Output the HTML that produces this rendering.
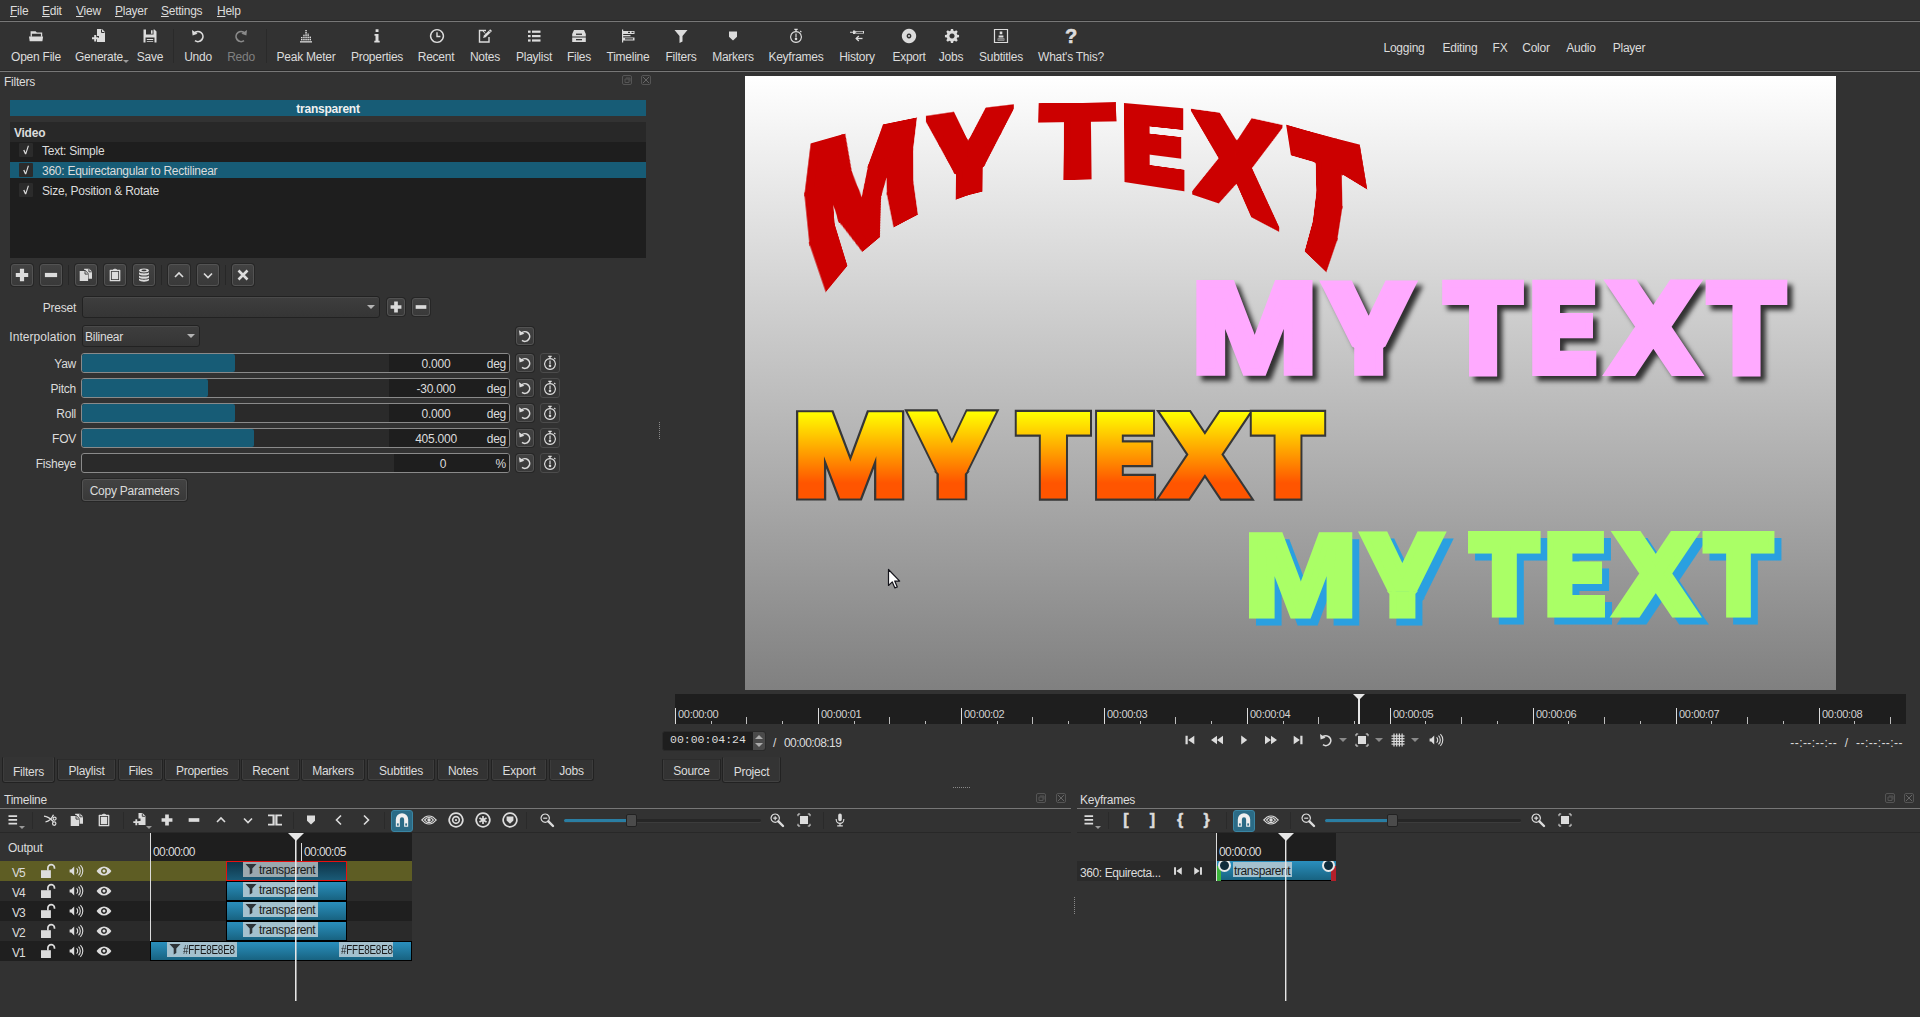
<!DOCTYPE html>
<html lang="en">
<head>
<meta charset="utf-8">
<title>Shotcut</title>
<style>
*{box-sizing:border-box;margin:0;padding:0}
html,body{width:1920px;height:1017px;overflow:hidden;background:#323232}
body{position:relative;font-family:"Liberation Sans","DejaVu Sans",sans-serif;font-size:12px;color:#dcdcdc;line-height:14px;letter-spacing:-0.25px;-webkit-font-smoothing:antialiased}
.a{position:absolute}
.t{position:absolute;white-space:nowrap;line-height:14px;height:14px}
.c{text-align:center}
.r{text-align:right}
.ic{position:absolute;display:block;overflow:visible}
.hl{position:absolute;height:1px;background:#777;box-shadow:0 -1px 0 #282828}
.btn{position:absolute;background:linear-gradient(#424242,#393939);border:1px solid #535353;border-radius:3px;box-shadow:0 0 0 1px #262626}
.btn .ic{left:50%;top:50%;transform:translate(-50%,-50%)}
.tab{position:absolute;border:1px solid #242424;border-radius:3px 3px 0 0;background:#343434;box-shadow:inset 0 1px 0 #444,inset 1px 0 0 #3d3d3d,inset -1px 0 0 #3d3d3d}
.tab.sel{background:#363636}
.tab span{position:absolute;left:0;right:0;text-align:center;line-height:14px;white-space:nowrap}
.tbl{position:absolute;width:120px;margin-left:-60px;text-align:center;white-space:nowrap;line-height:14px;height:14px}
.sld{position:absolute;height:20px;border:1px solid #8a8a8a;border-radius:3px;background:#2a2a2a;overflow:hidden}
.sld .fill{position:absolute;left:0;top:0;bottom:0;background:#175c76;border-radius:2px}
.sld .spin{position:absolute;right:0;top:0;bottom:0;background:#1e1e1e}
.dis{color:#808080}
.combo{background:linear-gradient(#3e3e3e,#353535);border:1px solid #222;border-radius:3px;box-shadow:inset 0 1px 0 #4a4a4a}
.arr{width:0;height:0;border-left:4px solid transparent;border-right:4px solid transparent;border-top:4px solid #b4b4b4}
.fl{position:absolute;left:0;top:0;font:bold 200px/200px "DejaVu Sans","Liberation Sans",sans-serif;letter-spacing:0;white-space:pre;transform-origin:0 0;-webkit-text-stroke-width:13px}
.fl.lm,.od.lm,.of.lm{font-family:"Liberation Sans","DejaVu Sans",sans-serif}
.fl.lm{-webkit-text-stroke-width:12px}
.rd{color:#cc0000;-webkit-text-stroke-color:#cc0000}
.pk{color:#ffaaff;-webkit-text-stroke-color:#ffaaff}
.gr{color:#aaff66;-webkit-text-stroke-color:#aaff66}
.od,.of{font:bold 200px "DejaVu Sans","Liberation Sans",sans-serif;letter-spacing:0}
.od{fill:#363636;stroke:#363636;stroke-linejoin:miter}
.of{stroke-linejoin:miter}
.tabs{position:absolute;border:1px solid #222;border-top-color:#2c2c2c;border-radius:0 0 3px 3px;background:#333;box-shadow:inset 0 -1px 0 #414141,inset 1px 0 0 #3c3c3c,inset -1px 0 0 #3c3c3c}
.tabs.sel{background:#343434;border-top-color:transparent}
.kbtn{border:1px solid #4c4c4c;border-radius:3px;background:#343434}
</style>
</head>
<body>
<!-- MENU BAR -->
<div class="t" style="left:10px;top:4px"><u>F</u>ile</div>
<div class="t" style="left:42px;top:4px"><u>E</u>dit</div>
<div class="t" style="left:76px;top:4px"><u>V</u>iew</div>
<div class="t" style="left:115px;top:4px"><u>P</u>layer</div>
<div class="t" style="left:161px;top:4px"><u>S</u>ettings</div>
<div class="t" style="left:217px;top:4px"><u>H</u>elp</div>
<div class="hl" style="left:0;top:21px;width:1920px"></div>
<!-- TOOLBAR -->
<div id="tb">
<div class="tbl" style="left:36px;top:50px">Open File</div><svg class="ic" width="16" height="16" viewBox="0 0 16 16" style="left:28px;top:28px"><path d="M2.6 3.2h5l1.2 1.3h5.4v4.2h-1.3v-2.9h-9v2.9h-1.3z" fill="#dcdcdc" /><path d="M1 8.6h14.1l-.7 4.7h-12.7z" fill="#dcdcdc" /></svg>
<div class="tbl" style="left:99px;top:50px">Generate</div><svg class="ic" width="16" height="16" viewBox="0 0 16 16" style="left:91px;top:28px"><path d="M6 1h5l3 3v10h-8v-4h2v-2h-2z" fill="#dcdcdc" /><path d="M10.5 1.5v3h3" fill="none" stroke="#323232" stroke-width="1"/><path d="M3.2 7h2v2.2h2.2v2h-2.2v2.2h-2v-2.2h-2.2v-2h2.2z" fill="#dcdcdc" /></svg>
<div class="a" style="left:123px;top:60px;width:0;height:0;border-left:3px solid transparent;border-right:3px solid transparent;border-top:3px solid #9a9a9a"></div>
<div class="tbl" style="left:150px;top:50px">Save</div><svg class="ic" width="16" height="16" viewBox="0 0 16 16" style="left:142px;top:28px"><path d="M1.5 1.5h11l2 2v11h-13z M4 1.5v5h7.5v-5z M3.5 9.5v5h9v-5z" fill="#dcdcdc" fill-rule="evenodd"/><path d="M9 2.3h1.6v3.4h-1.6z" fill="#dcdcdc" /><path d="M4.8 11h6.4v1h-6.4z M4.8 13h6.4v.8h-6.4z" fill="#dcdcdc" /></svg>
<div class="a" style="left:173px;top:29px;width:1px;height:34px;background:#2a2a2a"></div>
<div class="tbl" style="left:198px;top:50px">Undo</div><svg class="ic" width="16" height="16" viewBox="0 0 16 16" style="left:190px;top:28px"><path d="M4.2 5.2A5 5 0 1 1 5 12.6" fill="none" stroke="#dcdcdc" stroke-width="1.7" /><path d="M2 2l.6 5.4l5-1.6z" fill="#dcdcdc" /></svg>
<div class="tbl dis" style="left:241px;top:50px">Redo</div><svg class="ic" width="16" height="16" viewBox="0 0 16 16" style="left:233px;top:28px;opacity:.85"><path d="M11.8 5.2A5 5 0 1 0 11 12.6" fill="none"  stroke-width="1.7" stroke="#9a9a9a"/><path d="M14 2l-.6 5.4l-5-1.6z" fill="#9a9a9a"/></svg>
<div class="a" style="left:266px;top:29px;width:1px;height:34px;background:#2a2a2a"></div>
<div class="tbl" style="left:306px;top:50px">Peak Meter</div><svg class="ic" width="16" height="16" viewBox="0 0 16 16" style="left:298px;top:28px"><path d="M2 13.2h12v1.3h-12z" fill="#dcdcdc" /><rect x="3" y="9" width="1.5" height="3.4000000000000004" fill="#dcdcdc"/><rect x="5.2" y="6.6" width="1.5" height="5.800000000000001" fill="#dcdcdc"/><rect x="7.3" y="2" width="1.5" height="10.4" fill="#dcdcdc"/><rect x="9.4" y="5.4" width="1.5" height="7.0" fill="#dcdcdc"/><rect x="11.5" y="8" width="1.5" height="4.4" fill="#dcdcdc"/><rect x="2.5" y="3.3" width="11" height=".7" fill="#323232"/><rect x="2.5" y="5.6" width="11" height=".7" fill="#323232"/><rect x="2.5" y="7.9" width="11" height=".7" fill="#323232"/><rect x="2.5" y="10.2" width="11" height=".7" fill="#323232"/></svg>
<div class="tbl" style="left:377px;top:50px">Properties</div><svg class="ic" width="16" height="16" viewBox="0 0 16 16" style="left:369px;top:28px"><path d="M6.6 1.2h2.9v2.9h-2.9z M5.5 6h4v6.8h1.2v1.7h-5.4v-1.7h1.2v-5.1h-1z" fill="#dcdcdc" /></svg>
<div class="tbl" style="left:436px;top:50px">Recent</div><svg class="ic" width="16" height="16" viewBox="0 0 16 16" style="left:429px;top:28px"><path d="M8 1.6a6.4 6.4 0 1 0 .01 0z" fill="none" stroke="#dcdcdc" stroke-width="1.4" /><path d="M8 4.2v4.3h3.4" fill="none" stroke="#dcdcdc" stroke-width="1.4" /></svg>
<div class="tbl" style="left:485px;top:50px">Notes</div><svg class="ic" width="16" height="16" viewBox="0 0 16 16" style="left:477px;top:28px"><path d="M9 2.5h-6.5v11.5h9.5v-5" fill="none" stroke="#dcdcdc" stroke-width="1.4" /><path d="M13.2 1.2l1.8 1.8l-6.3 6.3l-2.6.8l.8-2.6z" fill="#dcdcdc" /><path d="M12 2.6l1.6 1.6" stroke="#323232" stroke-width=".8"/><path d="M6 3l2.2 2.6" stroke="#dcdcdc" stroke-width="1" fill="none"/></svg>
<div class="tbl" style="left:534px;top:50px">Playlist</div><svg class="ic" width="16" height="16" viewBox="0 0 16 16" style="left:526px;top:28px"><rect x="2" y="2.6" width="2.6" height="2.2" fill="#dcdcdc"/><rect x="6" y="2.6" width="8.5" height="2.2" fill="#dcdcdc"/><rect x="2" y="7" width="2.6" height="2.2" fill="#dcdcdc"/><rect x="6" y="7" width="8.5" height="2.2" fill="#dcdcdc"/><rect x="2" y="11.4" width="2.6" height="2.2" fill="#dcdcdc"/><rect x="6" y="11.4" width="8.5" height="2.2" fill="#dcdcdc"/></svg>
<div class="tbl" style="left:579px;top:50px">Files</div><svg class="ic" width="16" height="16" viewBox="0 0 16 16" style="left:571px;top:28px"><path d="M3 2h10l1.8 4v2.5h-13.6v-2.5z M1.2 9.5h13.6v4.5h-13.6z" fill="#dcdcdc" /><rect x="5" y="5.6" width="6" height="1.3" fill="#323232"/><rect x="5" y="11" width="6" height="1.3" fill="#323232"/></svg>
<div class="tbl" style="left:628px;top:50px">Timeline</div><svg class="ic" width="16" height="16" viewBox="0 0 16 16" style="left:620px;top:28px"><path d="M2 1.5h1.2v13h-1.2z" fill="#dcdcdc" /><path d="M3 3h11.5v3h-11.5z M3 7h7.5v1.2h-7.5z M3 9.5h11.5v3h-11.5z" fill="#dcdcdc" /><rect x="8" y="3.8" width="2" height="1.2" fill="#323232"/><rect x="11.5" y="3.8" width="2" height="1.2" fill="#323232"/><rect x="5" y="10.3" width="8" height="1.2" fill="#323232"/></svg>
<div class="tbl" style="left:681px;top:50px">Filters</div><svg class="ic" width="16" height="16" viewBox="0 0 16 16" style="left:673px;top:28px"><path d="M1.5 2h13l-5 6v5.5l-3 1.5v-7z" fill="#dcdcdc" /></svg>
<div class="tbl" style="left:733px;top:50px">Markers</div><svg class="ic" width="16" height="16" viewBox="0 0 16 16" style="left:725px;top:28px"><path d="M4 3.5h8v5.2l-4 3.8l-4-3.8z" fill="#dcdcdc" /></svg>
<div class="tbl" style="left:796px;top:50px">Keyframes</div><svg class="ic" width="16" height="16" viewBox="0 0 16 16" style="left:788px;top:28px"><path d="M8 3.6a5.4 5.4 0 1 0 .01 0z" fill="none" stroke="#dcdcdc" stroke-width="1.2" /><path d="M6.3 .8h3.4v1.3h-1v1.4h-1.4v-1.4h-1z" fill="#dcdcdc" /><path d="M7.4 5.5h1.2v3.7h-1.2z" fill="#dcdcdc" /><path d="M8 11.8a1.3 1.3 0 1 0 .01 0z" fill="#dcdcdc" transform="translate(0,-2.2)"/><path d="M12.2 3l1.2 1.2" fill="none" stroke="#dcdcdc" stroke-width="1.1" /></svg>
<div class="tbl" style="left:857px;top:50px">History</div><svg class="ic" width="16" height="16" viewBox="0 0 16 16" style="left:849px;top:28px"><path d="M1 3.8h3v1h-3z M4 2.6h2.2v3.4h-2.2z" fill="#dcdcdc" /><path d="M6.2 4.3h8.8" fill="none" stroke="#dcdcdc" stroke-width="2.6" /><rect x="7.2" y="3.7" width="6.8" height="1.2" fill="#323232"/><path d="M13.5 10.5h-6" fill="none" stroke="#dcdcdc" stroke-width="1.3" /><path d="M9.8 8l-2.6 2.5l2.6 2.5" fill="none" stroke="#dcdcdc" stroke-width="1.3" /></svg>
<div class="tbl" style="left:909px;top:50px">Export</div><svg class="ic" width="16" height="16" viewBox="0 0 16 16" style="left:901px;top:28px"><path d="M8 .8a7.2 7.2 0 1 0 .01 0z M8 5.6a2.4 2.4 0 1 1 -.01 0z" fill="#dcdcdc" fill-rule="evenodd"/><path d="M8 7.1a.9.9 0 1 0 .01 0z" fill="#dcdcdc" /></svg>
<div class="tbl" style="left:951px;top:50px">Jobs</div><svg class="ic" width="16" height="16" viewBox="0 0 16 16" style="left:944px;top:28px"><path d="M6.9 1h2.2l.3 1.8l1.3.55l1.5-1.05l1.55 1.55l-1.05 1.5l.55 1.3l1.8.3v2.2l-1.8.3l-.55 1.3l1.05 1.5l-1.55 1.55l-1.5-1.05l-1.3.55l-.3 1.8h-2.2l-.3-1.8l-1.3-.55l-1.5 1.05l-1.55-1.55l1.05-1.5l-.55-1.3l-1.8-.3v-2.2l1.8-.3l.55-1.3l-1.05-1.5l1.55-1.55l1.5 1.05l1.3-.55z M8 5.4a2.6 2.6 0 1 0 .01 0z" fill="#dcdcdc" fill-rule="evenodd"/></svg>
<div class="tbl" style="left:1001px;top:50px">Subtitles</div><svg class="ic" width="16" height="16" viewBox="0 0 16 16" style="left:993px;top:28px"><path d="M1.5 1.5h13v13h-13z" fill="none" stroke="#dcdcdc" stroke-width="1.2" /><path d="M6.7 3.6h2.6v2.6h-2.6z M5.6 7.4h4.8v2h-4.8z M4.6 10.4h6.8v2.2h-6.8z" fill="#dcdcdc" /><rect x="4.6" y="11.2" width="6.8" height=".6" fill="#323232"/></svg>
<div class="tbl" style="left:1071px;top:50px">What's This?</div>
<div class="t c" style="left:1061px;top:26px;width:20px;font:bold 20px/20px 'Liberation Sans',sans-serif;height:20px;-webkit-text-stroke:.6px #dcdcdc">?</div>
<div class="tbl" style="left:1404px;top:41px">Logging</div>
<div class="tbl" style="left:1460px;top:41px">Editing</div>
<div class="tbl" style="left:1500px;top:41px">FX</div>
<div class="tbl" style="left:1536px;top:41px">Color</div>
<div class="tbl" style="left:1581px;top:41px">Audio</div>
<div class="tbl" style="left:1629px;top:41px">Player</div>
</div>
<div class="hl" style="left:0;top:71px;width:1920px"></div>
<!-- FILTERS DOCK -->
<div class="t" style="left:4px;top:75px">Filters</div>
<svg class="ic" width="10" height="10" viewBox="0 0 10 10" style="left:622px;top:75px"><rect x=".5" y=".5" width="9" height="9" rx="1.5" fill="none" stroke="#555" stroke-width="1"/><path d="M3 4h4v3.5h-4z M4 3h4v3.5" fill="none" stroke="#555" stroke-width="1"/></svg><svg class="ic" width="10" height="10" viewBox="0 0 10 10" style="left:641px;top:75px"><rect x=".5" y=".5" width="9" height="9" rx="1.5" fill="none" stroke="#555" stroke-width="1"/><path d="M2 2l6 6M8 2l-6 6" fill="none" stroke="#666" stroke-width="1"/></svg>
<div class="a" style="left:10px;top:100px;width:636px;height:16px;background:#175c76"></div>
<div class="t c" style="left:10px;top:102px;width:636px;font-weight:bold;color:#f0f0f0">transparent</div>
<div class="a" style="left:10px;top:122px;width:636px;height:136px;background:#1e1e1e"></div>
<div class="a" style="left:10px;top:122px;width:636px;height:20px;background:#282828"></div>
<div class="t" style="left:14px;top:126px;font-weight:bold">Video</div>
<div class="a" style="left:10px;top:162px;width:636px;height:16px;background:#175c76"></div>
<div class="a" style="left:19px;top:143px;width:14px;height:14px;background:#2b2b2b;border-radius:1px"></div><svg class="ic" width="14" height="14" viewBox="0 0 14 14" style="left:19px;top:143px"><path d="M4.2 7.2l1.2-.4l1.2 2.6l2.2-6.6h1.2l-2.8 8.4h-1.2z" fill="#dcdcdc"/></svg>
<div class="t" style="left:42px;top:144px">Text: Simple</div>
<div class="a" style="left:19px;top:163px;width:14px;height:14px;background:#2b2b2b;border-radius:1px"></div><svg class="ic" width="14" height="14" viewBox="0 0 14 14" style="left:19px;top:163px"><path d="M4.2 7.2l1.2-.4l1.2 2.6l2.2-6.6h1.2l-2.8 8.4h-1.2z" fill="#dcdcdc"/></svg>
<div class="t" style="left:42px;top:164px">360: Equirectangular to Rectilinear</div>
<div class="a" style="left:19px;top:183px;width:14px;height:14px;background:#2b2b2b;border-radius:1px"></div><svg class="ic" width="14" height="14" viewBox="0 0 14 14" style="left:19px;top:183px"><path d="M4.2 7.2l1.2-.4l1.2 2.6l2.2-6.6h1.2l-2.8 8.4h-1.2z" fill="#dcdcdc"/></svg>
<div class="t" style="left:42px;top:184px">Size, Position &amp; Rotate</div>
<div class="btn" style="left:11px;top:264px;width:22px;height:22px"><svg class="ic" width="16" height="16" viewBox="0 0 16 16" style=""><path d="M5.9 1.8h4.2v4.1h4.1v4.2h-4.1v4.1h-4.2v-4.1h-4.1v-4.2h4.1z" fill="#dcdcdc" /></svg></div>
<div class="btn" style="left:40px;top:264px;width:22px;height:22px"><svg class="ic" width="16" height="16" viewBox="0 0 16 16" style=""><path d="M1.9 5.9h12.2v4.2h-12.2z" fill="#dcdcdc" /></svg></div>
<div class="btn" style="left:75px;top:264px;width:22px;height:22px"><svg class="ic" width="16" height="16" viewBox="0 0 16 16" style=""><path d="M6.2 1.7h5l2.8 2.8v7.3h-3.4v-5.4l-3.3-3.3h-1.1z" fill="#dcdcdc" /><path d="M10.9 1.9v2.9h2.9" fill="none" stroke="#3b3b3b" stroke-width=".9"/><path d="M1.7 4h5.6l2.8 2.8v7.1h-8.4z" fill="#dcdcdc" /><path d="M7 4.2v2.9h2.9" fill="none" stroke="#3b3b3b" stroke-width=".9"/></svg></div>
<div class="btn" style="left:104px;top:264px;width:22px;height:22px"><svg class="ic" width="16" height="16" viewBox="0 0 16 16" style=""><path d="M3.3 3.3h9.4v10.4h-9.4z" fill="none" stroke="#dcdcdc" stroke-width="1.3" stroke-linejoin="round"/><path d="M4.8 4.8h6.4v7.4h-6.4z" fill="#dcdcdc" /><path d="M6 2.2h1.2l.8-1l.8 1h1.2v1.6h-4z" fill="#dcdcdc" /></svg></div>
<div class="btn" style="left:133px;top:264px;width:22px;height:22px"><svg class="ic" width="16" height="16" viewBox="0 0 16 16" style=""><path d="M8 1.5c3 0 5 .9 5 2s-2 2-5 2s-5-.9-5-2s2-2 5-2z" fill="#dcdcdc" /><ellipse cx="8" cy="3.4" rx="2.6" ry=".8" fill="#3b3b3b"/><path d="M3 5.2c1 1.6 9 1.6 10 0v2c-1 1.7-9 1.7-10 0z M3 8.4c1 1.6 9 1.6 10 0v2c-1 1.7-9 1.7-10 0z M3 11.6c1 1.6 9 1.6 10 0v1.6c-1 1.9-9 1.9-10 0z" fill="#dcdcdc" /></svg></div>
<div class="btn" style="left:168px;top:264px;width:22px;height:22px"><svg class="ic" width="16" height="16" viewBox="0 0 16 16" style=""><path d="M4 10l4-4l4 4" fill="none" stroke="#dcdcdc" stroke-width="1.6" /></svg></div>
<div class="btn" style="left:197px;top:264px;width:22px;height:22px"><svg class="ic" width="16" height="16" viewBox="0 0 16 16" style=""><path d="M4 6.5l4 4l4-4" fill="none" stroke="#dcdcdc" stroke-width="1.6" /></svg></div>
<div class="btn" style="left:232px;top:264px;width:22px;height:22px"><svg class="ic" width="16" height="16" viewBox="0 0 16 16" style=""><path d="M3.5 3.5l9 9M12.5 3.5l-9 9" fill="none" stroke="#dcdcdc" stroke-width="2.6" /></svg></div>
<div class="a" style="left:68px;top:265px;width:1px;height:20px;background:#272727"></div>
<div class="a" style="left:161px;top:265px;width:1px;height:20px;background:#272727"></div>
<div class="a" style="left:225px;top:265px;width:1px;height:20px;background:#272727"></div>
<div class="t r" style="left:0;top:301px;width:76px">Preset</div>
<div class="a combo" style="left:82px;top:296px;width:298px;height:22px"></div>
<div class="a arr" style="left:367px;top:305px"></div>
<div class="btn" style="left:387px;top:298px;width:18px;height:18px"><svg class="ic" width="14" height="14" viewBox="0 0 16 16" style=""><path d="M5.9 1.8h4.2v4.1h4.1v4.2h-4.1v4.1h-4.2v-4.1h-4.1v-4.2h4.1z" fill="#dcdcdc" /></svg></div>
<div class="btn" style="left:412px;top:298px;width:18px;height:18px"><svg class="ic" width="14" height="14" viewBox="0 0 16 16" style=""><path d="M1.9 5.9h12.2v4.2h-12.2z" fill="#dcdcdc" /></svg></div>
<div class="t r" style="left:0;top:330px;width:76px;letter-spacing:0.05px">Interpolation</div>
<div class="a combo" style="left:82px;top:325px;width:118px;height:22px"></div>
<div class="t" style="left:85px;top:330px">Bilinear</div>
<div class="a arr" style="left:187px;top:334px"></div>
<div class="btn" style="left:516px;top:327px;width:18px;height:18px"><svg class="ic" width="16" height="16" viewBox="0 0 16 16" style=""><path d="M4.4 5.2A4.8 4.8 0 1 1 5 12.4" fill="none" stroke="#dcdcdc" stroke-width="1.6" /><path d="M2 2.2l.6 5.2l4.8-1.6z" fill="#dcdcdc" /></svg></div>
<div class="t r" style="left:0;top:357px;width:76px">Yaw</div>
<div class="sld" style="left:81px;top:353px;width:429px"><div class="fill" style="width:153px"></div><div class="spin" style="width:120px"></div></div>
<div class="t c" style="left:396px;top:357px;width:80px">0.000</div>
<div class="t r" style="left:456px;top:357px;width:50px">deg</div>
<div class="btn" style="left:516px;top:354px;width:18px;height:18px"><svg class="ic" width="16" height="16" viewBox="0 0 16 16" style=""><path d="M4.4 5.2A4.8 4.8 0 1 1 5 12.4" fill="none" stroke="#dcdcdc" stroke-width="1.6" /><path d="M2 2.2l.6 5.2l4.8-1.6z" fill="#dcdcdc" /></svg></div>
<div class="a kbtn" style="left:540px;top:353px;width:20px;height:20px"><svg class="ic" width="16" height="16" viewBox="0 0 16 16" style="left:1px;top:1px"><path d="M8 3.6a5.4 5.4 0 1 0 .01 0z" fill="none" stroke="#dcdcdc" stroke-width="1.2" /><path d="M6.3 .8h3.4v1.3h-1v1.4h-1.4v-1.4h-1z" fill="#dcdcdc" /><path d="M7.4 5.5h1.2v3.7h-1.2z" fill="#dcdcdc" /><path d="M8 11.8a1.3 1.3 0 1 0 .01 0z" fill="#dcdcdc" transform="translate(0,-2.2)"/><path d="M12.2 3l1.2 1.2" fill="none" stroke="#dcdcdc" stroke-width="1.1" /></svg></div>
<div class="t r" style="left:0;top:382px;width:76px">Pitch</div>
<div class="sld" style="left:81px;top:378px;width:429px"><div class="fill" style="width:126px"></div><div class="spin" style="width:120px"></div></div>
<div class="t c" style="left:396px;top:382px;width:80px">-30.000</div>
<div class="t r" style="left:456px;top:382px;width:50px">deg</div>
<div class="btn" style="left:516px;top:379px;width:18px;height:18px"><svg class="ic" width="16" height="16" viewBox="0 0 16 16" style=""><path d="M4.4 5.2A4.8 4.8 0 1 1 5 12.4" fill="none" stroke="#dcdcdc" stroke-width="1.6" /><path d="M2 2.2l.6 5.2l4.8-1.6z" fill="#dcdcdc" /></svg></div>
<div class="a kbtn" style="left:540px;top:378px;width:20px;height:20px"><svg class="ic" width="16" height="16" viewBox="0 0 16 16" style="left:1px;top:1px"><path d="M8 3.6a5.4 5.4 0 1 0 .01 0z" fill="none" stroke="#dcdcdc" stroke-width="1.2" /><path d="M6.3 .8h3.4v1.3h-1v1.4h-1.4v-1.4h-1z" fill="#dcdcdc" /><path d="M7.4 5.5h1.2v3.7h-1.2z" fill="#dcdcdc" /><path d="M8 11.8a1.3 1.3 0 1 0 .01 0z" fill="#dcdcdc" transform="translate(0,-2.2)"/><path d="M12.2 3l1.2 1.2" fill="none" stroke="#dcdcdc" stroke-width="1.1" /></svg></div>
<div class="t r" style="left:0;top:407px;width:76px">Roll</div>
<div class="sld" style="left:81px;top:403px;width:429px"><div class="fill" style="width:153px"></div><div class="spin" style="width:120px"></div></div>
<div class="t c" style="left:396px;top:407px;width:80px">0.000</div>
<div class="t r" style="left:456px;top:407px;width:50px">deg</div>
<div class="btn" style="left:516px;top:404px;width:18px;height:18px"><svg class="ic" width="16" height="16" viewBox="0 0 16 16" style=""><path d="M4.4 5.2A4.8 4.8 0 1 1 5 12.4" fill="none" stroke="#dcdcdc" stroke-width="1.6" /><path d="M2 2.2l.6 5.2l4.8-1.6z" fill="#dcdcdc" /></svg></div>
<div class="a kbtn" style="left:540px;top:403px;width:20px;height:20px"><svg class="ic" width="16" height="16" viewBox="0 0 16 16" style="left:1px;top:1px"><path d="M8 3.6a5.4 5.4 0 1 0 .01 0z" fill="none" stroke="#dcdcdc" stroke-width="1.2" /><path d="M6.3 .8h3.4v1.3h-1v1.4h-1.4v-1.4h-1z" fill="#dcdcdc" /><path d="M7.4 5.5h1.2v3.7h-1.2z" fill="#dcdcdc" /><path d="M8 11.8a1.3 1.3 0 1 0 .01 0z" fill="#dcdcdc" transform="translate(0,-2.2)"/><path d="M12.2 3l1.2 1.2" fill="none" stroke="#dcdcdc" stroke-width="1.1" /></svg></div>
<div class="t r" style="left:0;top:432px;width:76px">FOV</div>
<div class="sld" style="left:81px;top:428px;width:429px"><div class="fill" style="width:172px"></div><div class="spin" style="width:120px"></div></div>
<div class="t c" style="left:396px;top:432px;width:80px">405.000</div>
<div class="t r" style="left:456px;top:432px;width:50px">deg</div>
<div class="btn" style="left:516px;top:429px;width:18px;height:18px"><svg class="ic" width="16" height="16" viewBox="0 0 16 16" style=""><path d="M4.4 5.2A4.8 4.8 0 1 1 5 12.4" fill="none" stroke="#dcdcdc" stroke-width="1.6" /><path d="M2 2.2l.6 5.2l4.8-1.6z" fill="#dcdcdc" /></svg></div>
<div class="a kbtn" style="left:540px;top:428px;width:20px;height:20px"><svg class="ic" width="16" height="16" viewBox="0 0 16 16" style="left:1px;top:1px"><path d="M8 3.6a5.4 5.4 0 1 0 .01 0z" fill="none" stroke="#dcdcdc" stroke-width="1.2" /><path d="M6.3 .8h3.4v1.3h-1v1.4h-1.4v-1.4h-1z" fill="#dcdcdc" /><path d="M7.4 5.5h1.2v3.7h-1.2z" fill="#dcdcdc" /><path d="M8 11.8a1.3 1.3 0 1 0 .01 0z" fill="#dcdcdc" transform="translate(0,-2.2)"/><path d="M12.2 3l1.2 1.2" fill="none" stroke="#dcdcdc" stroke-width="1.1" /></svg></div>
<div class="t r" style="left:0;top:457px;width:76px">Fisheye</div>
<div class="sld" style="left:81px;top:453px;width:429px"><div class="spin" style="width:115px"></div></div>
<div class="t c" style="left:403px;top:457px;width:80px">0</div>
<div class="t r" style="left:456px;top:457px;width:50px">%</div>
<div class="btn" style="left:516px;top:454px;width:18px;height:18px"><svg class="ic" width="16" height="16" viewBox="0 0 16 16" style=""><path d="M4.4 5.2A4.8 4.8 0 1 1 5 12.4" fill="none" stroke="#dcdcdc" stroke-width="1.6" /><path d="M2 2.2l.6 5.2l4.8-1.6z" fill="#dcdcdc" /></svg></div>
<div class="a kbtn" style="left:540px;top:453px;width:20px;height:20px"><svg class="ic" width="16" height="16" viewBox="0 0 16 16" style="left:1px;top:1px"><path d="M8 3.6a5.4 5.4 0 1 0 .01 0z" fill="none" stroke="#dcdcdc" stroke-width="1.2" /><path d="M6.3 .8h3.4v1.3h-1v1.4h-1.4v-1.4h-1z" fill="#dcdcdc" /><path d="M7.4 5.5h1.2v3.7h-1.2z" fill="#dcdcdc" /><path d="M8 11.8a1.3 1.3 0 1 0 .01 0z" fill="#dcdcdc" transform="translate(0,-2.2)"/><path d="M12.2 3l1.2 1.2" fill="none" stroke="#dcdcdc" stroke-width="1.1" /></svg></div>
<div class="btn" style="left:82px;top:479px;width:105px;height:22px;border-radius:3px"></div>
<div class="t c" style="left:82px;top:484px;width:105px">Copy Parameters</div>
<div class="a" style="left:659px;top:422px;width:1px;height:18px;background:repeating-linear-gradient(#8a8a8a 0 1px,transparent 1px 2px)"></div>
<!-- PREVIEW -->
<div id="pv" class="a" style="left:745px;top:76px;width:1091px;height:614px;overflow:hidden;background:linear-gradient(#ffffff,#808080)">
<div class="a" style="left:0;top:0;width:0;height:0">
<span class="fl rd lm" style="clip-path:polygon(-53.0px -15.0px,53.9px -15.0px,53.9px 76.3px,-53.0px 76.3px);transform:matrix3d(1.06208,-5.42619e-05,0,0.00351075,-0.101738,1.12088,0,0.00047141,0,0,1,0,62.8741,41.9411,0,1)">M</span>
<span class="fl rd lm" aria-hidden="true" style="clip-path:polygon(-53.0px 73.7px,53.9px 73.7px,53.9px 126.3px,-53.0px 126.3px);transform:matrix3d(1.22597,0.121488,0,0.00487505,0.182848,1.29355,0,0.00109867,0,0,1,0,43.7297,34.8679,0,1)">M</span>
<span class="fl rd lm" aria-hidden="true" style="clip-path:polygon(-53.0px 123.7px,53.9px 123.7px,53.9px 215.0px,-53.0px 215.0px);transform:matrix3d(1.40429,0.336481,0,0.00649051,0.502506,1.4488,0,0.00133059,0,0,1,0,5.10987,20.7481,0,1)">M</span>
<span class="fl rd lm" aria-hidden="true" style="clip-path:polygon(51.3px -15.0px,114.7px -15.0px,114.7px 76.3px,51.3px 76.3px);transform:matrix3d(1.43172,-0.00958738,0,0.00414189,-0.141976,1.09892,0,5.99995e-05,0,0,1,0,46.6625,44.3312,0,1)">M</span>
<span class="fl rd lm" aria-hidden="true" style="clip-path:polygon(51.3px 73.7px,114.7px 73.7px,114.7px 126.3px,51.3px 126.3px);transform:matrix3d(1.61183,0.0195603,0,0.00487815,0.178481,1.2844,0,0.00105425,0,0,1,0,23.4721,40.5884,0,1)">M</span>
<span class="fl rd lm" aria-hidden="true" style="clip-path:polygon(51.3px 123.7px,114.7px 123.7px,114.7px 215.0px,51.3px 215.0px);transform:matrix3d(2.1333,0.159933,0,0.0071201,0.690102,1.85188,0,0.00265168,0,0,1,0,-38.0415,8.51766,0,1)">M</span>
<span class="fl rd lm" aria-hidden="true" style="clip-path:polygon(112.1px -15.0px,219.0px -15.0px,219.0px 76.3px,112.1px 76.3px);transform:matrix3d(1.9157,-0.0197451,0,0.00486025,-0.237473,1.09091,0,-0.000600451,0,0,1,0,3.2382,48.8053,0,1)">M</span>
<span class="fl rd lm" aria-hidden="true" style="clip-path:polygon(112.1px 73.7px,219.0px 73.7px,219.0px 126.3px,112.1px 126.3px);transform:matrix3d(1.56723,-0.11817,0,0.00320057,0.116553,1.07634,0,0.000633252,0,0,1,0,3.32749,52.9039,0,1)">M</span>
<span class="fl rd lm" aria-hidden="true" style="clip-path:polygon(112.1px 123.7px,219.0px 123.7px,219.0px 215.0px,112.1px 215.0px);transform:matrix3d(1.61606,-0.233887,0,0.00268159,0.613437,1.50733,0,0.00263025,0,0,1,0,-38.4423,35.1768,0,1)">M</span>
<span class="fl rd" style="clip-path:polygon(-73.0px -23.5px,73.8px -23.5px,73.8px 61.5px,-73.0px 61.5px);transform:matrix3d(0.809057,-0.0334439,0,0.00129855,0.0382796,0.755068,0,0.000202872,0,0,1,0,186.048,26.8698,0,1)">Y</span>
<span class="fl rd" aria-hidden="true" style="clip-path:polygon(-73.0px 58.9px,73.8px 58.9px,73.8px 105.2px,-73.0px 105.2px);transform:matrix3d(0.814249,-0.0319519,0,0.001322,0.038971,0.768706,0,0.000206536,0,0,1,0,186.059,26.0617,0,1)">Y</span>
<span class="fl rd" aria-hidden="true" style="clip-path:polygon(-73.0px 102.7px,73.8px 102.7px,73.8px 215.5px,-73.0px 215.5px);transform:matrix3d(0.811439,-0.0295331,0,0.00133194,0.0215605,0.425282,0,0.000114265,0,0,1,0,186.095,60.7624,0,1)">Y</span>
<span class="fl rd" aria-hidden="true" style="clip-path:polygon(71.2px -23.5px,218.0px -23.5px,218.0px 61.5px,71.2px 61.5px);transform:matrix3d(0.872404,-0.0416537,0,0.00102099,0.0120418,0.732674,0,8.47202e-05,0,0,1,0,176.954,27.0924,0,1)">Y</span>
<span class="fl rd" aria-hidden="true" style="clip-path:polygon(71.2px 58.9px,218.0px 58.9px,218.0px 105.2px,71.2px 105.2px);transform:matrix3d(0.874792,-0.0412851,0,0.00102861,0.0121316,0.738142,0,8.53526e-05,0,0,1,0,176.908,26.7736,0,1)">Y</span>
<span class="fl rd" aria-hidden="true" style="clip-path:polygon(71.2px 102.7px,218.0px 102.7px,218.0px 215.5px,71.2px 215.5px);transform:matrix3d(0.873583,-0.0405834,0,0.0010318,0.00668227,0.406579,0,4.70133e-05,0,0,1,0,176.725,60.8405,0,1)">Y</span>
<span class="fl" style="transform:scale(0)"> </span>
<span class="fl rd" style="transform:matrix3d(0.539932,-0.00557641,0,5.30641e-05,-0.12372,0.443719,0,-0.000372334,0,0,1,0,296.856,19.5624,0,1)">T</span>
<span class="fl rd" style="transform:matrix3d(0.336264,0.032788,0,-0.000406842,0.0183194,0.499292,0,4.16919e-05,0,0,1,0,373.219,18.2769,0,1)">E</span>
<span class="fl rd" style="clip-path:polygon(-68.0px -23.5px,78.3px -23.5px,78.3px 215.5px,-68.0px 215.5px);transform:matrix3d(-0.0221735,0.0311642,0,-0.00121511,0.142042,0.580749,0,0.000298989,0,0,1,0,447.873,23.5202,0,1)">X</span>
<span class="fl rd" aria-hidden="true" style="clip-path:polygon(75.7px -23.5px,222.0px -23.5px,222.0px 215.5px,75.7px 215.5px);transform:matrix3d(-0.26164,0.0400073,0,-0.00142254,0.125872,0.566534,0,0.000265897,0,0,1,0,458.45,22.4304,0,1)">X</span>
<span class="fl rd" style="clip-path:polygon(-65.5px -22.5px,42.8px -22.5px,42.8px 57.5px,-65.5px 57.5px);transform:matrix3d(0.464294,0.138926,0,-5.26195e-05,-0.266653,0.686621,0,-0.000701318,0,0,1,0,541.918,37.1635,0,1)">T</span>
<span class="fl rd" aria-hidden="true" style="clip-path:polygon(40.2px -22.5px,95.8px -22.5px,95.8px 57.5px,40.2px 57.5px);transform:matrix3d(-0.968464,-0.0278214,0,-0.00239949,0.102128,0.678418,0,-3.39267e-05,0,0,1,0,546.524,39.4493,0,1)">T</span>
<span class="fl rd" aria-hidden="true" style="clip-path:polygon(40.2px 54.9px,95.8px 54.9px,95.8px 97.8px,40.2px 97.8px);transform:matrix3d(-0.848635,-0.00425575,0,-0.0022233,0.21367,0.73726,0,0.00033775,0,0,1,0,551.354,37.5627,0,1)">T</span>
<span class="fl rd" aria-hidden="true" style="clip-path:polygon(40.2px 95.2px,95.8px 95.2px,95.8px 137.3px,40.2px 137.3px);transform:matrix3d(-0.832386,0.0105493,0,-0.00224554,0.44586,0.885642,0,0.00094627,0,0,1,0,561.266,29.3005,0,1)">T</span>
<span class="fl rd" aria-hidden="true" style="clip-path:polygon(40.2px 134.7px,95.8px 134.7px,95.8px 215.5px,40.2px 215.5px);transform:matrix3d(-0.981086,-0.00144574,0,-0.00259835,0.868987,1.2112,0,0.00197657,0,0,1,0,581.067,3.72192,0,1)">T</span>
<span class="fl rd" aria-hidden="true" style="clip-path:polygon(93.2px -22.5px,201.5px -22.5px,201.5px 57.5px,93.2px 57.5px);transform:matrix3d(-1.54044,-0.120136,0,-0.00308796,0.340239,0.667659,0,0.000380039,0,0,1,0,562.222,44.7162,0,1)">T</span>
</div>
<div class="a" style="left:0;top:0;width:0;height:0;filter:drop-shadow(5.5px 5.5px 2.5px #303030)">
<span class="fl pk lm" style="transform:matrix(0.76513,0,0,0.64333,445.84,187.62)">M</span>
<span class="fl pk" style="clip-path:polygon(-60px -43.5px,260px -43.5px,260px 104.5px,-60px 104.5px);transform:matrix(0.57193,0,0,0.76141,582.14,191.14)">Y</span>
<span class="fl pk" aria-hidden="true" style="clip-path:polygon(-60px 103.4px,260px 103.4px,260px 235.5px,-60px 235.5px);transform:matrix(0.57193,0,0,0.4181,582.14,226.82)">Y</span>
<span class="fl" style="transform:scale(0)"> </span>
<span class="fl pk" style="transform:matrix(0.5551,0,0,0.61076,700.25,193.01)">T</span>
<span class="fl pk" style="transform:matrix(0.54872,0,0,0.60692,780.69,193.69)">E</span>
<span class="fl pk" style="transform:matrix(0.59824,0,0,0.60692,862.29,193.69)">X</span>
<span class="fl pk" style="transform:matrix(0.55374,0,0,0.61076,963.85,193.01)">T</span>
</div>
<div class="a" style="left:0;top:0;width:0;height:0;filter:drop-shadow(7px 7px 0 #2aa0e0)">
<span class="fl gr lm" style="transform:matrix(0.67961,0,0,0.57333,498.94,441.67)">M</span>
<span class="fl gr" style="clip-path:polygon(-60px -43.5px,260px -43.5px,260px 104.5px,-60px 104.5px);transform:matrix(0.51228,0,0,0.67856,620.36,444.8)">Y</span>
<span class="fl gr" aria-hidden="true" style="clip-path:polygon(-60px 103.4px,260px 103.4px,260px 235.5px,-60px 235.5px);transform:matrix(0.51228,0,0,0.37261,620.36,476.61)">Y</span>
<span class="fl" style="transform:scale(0)"> </span>
<span class="fl gr" style="transform:matrix(0.49252,0,0,0.5443,725.71,446.47)">T</span>
<span class="fl gr" style="transform:matrix(0.49402,0,0,0.54088,796.52,447.08)">E</span>
<span class="fl gr" style="transform:matrix(0.53941,0,0,0.54088,869.32,447.08)">X</span>
<span class="fl gr" style="transform:matrix(0.48776,0,0,0.5443,960.18,446.47)">T</span>
</div>
<svg class="a" style="left:0;top:0;overflow:visible" width="1091" height="614" viewBox="0 0 1091 614">
<linearGradient id="og0" gradientUnits="userSpaceOnUse" x1="0" y1="-144.00" x2="0" y2="6.00"><stop offset="0" stop-color="#ffff00"/><stop offset="0.82" stop-color="#ff5500"/><stop offset="1" stop-color="#ff5500"/></linearGradient><clipPath id="oc1" clipPathUnits="userSpaceOnUse"><rect x="0" y="295.2" width="1091" height="100.9"/></clipPath><linearGradient id="og2" gradientUnits="userSpaceOnUse" x1="0" y1="-152.50" x2="0" y2="-25.76"><stop offset="0" stop-color="#ffff00"/><stop offset="0.82" stop-color="#ff5500"/><stop offset="1" stop-color="#ff5500"/></linearGradient><clipPath id="oc3" clipPathUnits="userSpaceOnUse"><rect x="0" y="395.5" width="1091" height="49.5"/></clipPath><linearGradient id="og4" gradientUnits="userSpaceOnUse" x1="0" y1="-224.31" x2="0" y2="6.50"><stop offset="0" stop-color="#ffff00"/><stop offset="0.82" stop-color="#ff5500"/><stop offset="1" stop-color="#ff5500"/></linearGradient><linearGradient id="og5" gradientUnits="userSpaceOnUse" x1="0" y1="-151.50" x2="0" y2="6.50"><stop offset="0" stop-color="#ffff00"/><stop offset="0.82" stop-color="#ff5500"/><stop offset="1" stop-color="#ff5500"/></linearGradient><linearGradient id="og6" gradientUnits="userSpaceOnUse" x1="0" y1="-152.50" x2="0" y2="6.50"><stop offset="0" stop-color="#ffff00"/><stop offset="0.82" stop-color="#ff5500"/><stop offset="1" stop-color="#ff5500"/></linearGradient><linearGradient id="og7" gradientUnits="userSpaceOnUse" x1="0" y1="-152.50" x2="0" y2="6.50"><stop offset="0" stop-color="#ffff00"/><stop offset="0.82" stop-color="#ff5500"/><stop offset="1" stop-color="#ff5500"/></linearGradient><linearGradient id="og8" gradientUnits="userSpaceOnUse" x1="0" y1="-151.50" x2="0" y2="6.50"><stop offset="0" stop-color="#ffff00"/><stop offset="0.82" stop-color="#ff5500"/><stop offset="1" stop-color="#ff5500"/></linearGradient>
<g aria-hidden="true"><g><g transform="matrix(0.68289,0,0,0.576,48.32,419.04)"><text class="od lm" stroke-width="18.7">M</text></g></g><g clip-path="url(#oc1)"><g transform="matrix(0.51228,0,0,0.68172,169.76,440.06)"><text class="od" stroke-width="20.0">Y</text></g></g><g clip-path="url(#oc3)"><g transform="matrix(0.51228,0,0,0.37434,169.76,420.07)"><text class="od" stroke-width="22.5">Y</text></g></g><g><g transform="matrix(0.49728,0,0,0.54684,274.54,418.95)"><text class="od" stroke-width="21.0">T</text></g></g><g><g transform="matrix(0.48889,0,0,0.5434,346.18,418.97)"><text class="od" stroke-width="21.1">E</text></g></g><g><g transform="matrix(0.53765,0,0,0.5434,418.6,418.97)"><text class="od" stroke-width="20.8">X</text></g></g><g><g transform="matrix(0.49116,0,0,0.54684,509.5,418.95)"><text class="od" stroke-width="21.1">T</text></g></g></g>
<g><g transform="matrix(0.68289,0,0,0.576,48.32,419.04)"><text class="of lm" fill="url(#og0)" stroke="url(#og0)" stroke-width="12">M</text></g></g><g clip-path="url(#oc1)"><g transform="matrix(0.51228,0,0,0.68172,169.76,440.06)"><text class="of" fill="url(#og2)" stroke="url(#og2)" stroke-width="13">Y</text></g></g><g clip-path="url(#oc3)" aria-hidden="true"><g transform="matrix(0.51228,0,0,0.37434,169.76,420.07)"><text class="of" fill="url(#og4)" stroke="url(#og4)" stroke-width="13">Y</text></g></g><text class="of" transform="scale(0)"> </text><g><g transform="matrix(0.49728,0,0,0.54684,274.54,418.95)"><text class="of" fill="url(#og5)" stroke="url(#og5)" stroke-width="13">T</text></g></g><g><g transform="matrix(0.48889,0,0,0.5434,346.18,418.97)"><text class="of" fill="url(#og6)" stroke="url(#og6)" stroke-width="13">E</text></g></g><g><g transform="matrix(0.53765,0,0,0.5434,418.6,418.97)"><text class="of" fill="url(#og7)" stroke="url(#og7)" stroke-width="13">X</text></g></g><g><g transform="matrix(0.49116,0,0,0.54684,509.5,418.95)"><text class="of" fill="url(#og8)" stroke="url(#og8)" stroke-width="13">T</text></g></g>
</svg>
</div>
<!-- PLAYER SCRUB BAR -->
<div class="a" style="left:675px;top:694px;width:1231px;height:30px;background:#1e1e1e;overflow:hidden">
<div class="a" style="left:0.0px;top:14px;width:1px;height:16px;background:#dcdcdc"></div>
<div class="t" style="left:3.0px;top:13px;font-size:11px;letter-spacing:-0.3px;color:#d2d2d2">00:00:00</div>
<div class="a" style="left:36px;top:27px;width:1px;height:3px;background:#bdbdbd"></div>
<div class="a" style="left:71px;top:23px;width:1px;height:7px;background:#bdbdbd"></div>
<div class="a" style="left:107px;top:27px;width:1px;height:3px;background:#bdbdbd"></div>
<div class="a" style="left:143.0px;top:14px;width:1px;height:16px;background:#dcdcdc"></div>
<div class="t" style="left:146.0px;top:13px;font-size:11px;letter-spacing:-0.3px;color:#d2d2d2">00:00:01</div>
<div class="a" style="left:179px;top:27px;width:1px;height:3px;background:#bdbdbd"></div>
<div class="a" style="left:214px;top:23px;width:1px;height:7px;background:#bdbdbd"></div>
<div class="a" style="left:250px;top:27px;width:1px;height:3px;background:#bdbdbd"></div>
<div class="a" style="left:286.0px;top:14px;width:1px;height:16px;background:#dcdcdc"></div>
<div class="t" style="left:289.0px;top:13px;font-size:11px;letter-spacing:-0.3px;color:#d2d2d2">00:00:02</div>
<div class="a" style="left:322px;top:27px;width:1px;height:3px;background:#bdbdbd"></div>
<div class="a" style="left:357px;top:23px;width:1px;height:7px;background:#bdbdbd"></div>
<div class="a" style="left:393px;top:27px;width:1px;height:3px;background:#bdbdbd"></div>
<div class="a" style="left:429.0px;top:14px;width:1px;height:16px;background:#dcdcdc"></div>
<div class="t" style="left:432.0px;top:13px;font-size:11px;letter-spacing:-0.3px;color:#d2d2d2">00:00:03</div>
<div class="a" style="left:465px;top:27px;width:1px;height:3px;background:#bdbdbd"></div>
<div class="a" style="left:500px;top:23px;width:1px;height:7px;background:#bdbdbd"></div>
<div class="a" style="left:536px;top:27px;width:1px;height:3px;background:#bdbdbd"></div>
<div class="a" style="left:572.0px;top:14px;width:1px;height:16px;background:#dcdcdc"></div>
<div class="t" style="left:575.0px;top:13px;font-size:11px;letter-spacing:-0.3px;color:#d2d2d2">00:00:04</div>
<div class="a" style="left:608px;top:27px;width:1px;height:3px;background:#bdbdbd"></div>
<div class="a" style="left:643px;top:23px;width:1px;height:7px;background:#bdbdbd"></div>
<div class="a" style="left:679px;top:27px;width:1px;height:3px;background:#bdbdbd"></div>
<div class="a" style="left:715.0px;top:14px;width:1px;height:16px;background:#dcdcdc"></div>
<div class="t" style="left:718.0px;top:13px;font-size:11px;letter-spacing:-0.3px;color:#d2d2d2">00:00:05</div>
<div class="a" style="left:750px;top:27px;width:1px;height:3px;background:#bdbdbd"></div>
<div class="a" style="left:786px;top:23px;width:1px;height:7px;background:#bdbdbd"></div>
<div class="a" style="left:822px;top:27px;width:1px;height:3px;background:#bdbdbd"></div>
<div class="a" style="left:858.0px;top:14px;width:1px;height:16px;background:#dcdcdc"></div>
<div class="t" style="left:861.0px;top:13px;font-size:11px;letter-spacing:-0.3px;color:#d2d2d2">00:00:06</div>
<div class="a" style="left:893px;top:27px;width:1px;height:3px;background:#bdbdbd"></div>
<div class="a" style="left:929px;top:23px;width:1px;height:7px;background:#bdbdbd"></div>
<div class="a" style="left:965px;top:27px;width:1px;height:3px;background:#bdbdbd"></div>
<div class="a" style="left:1001.0px;top:14px;width:1px;height:16px;background:#dcdcdc"></div>
<div class="t" style="left:1004.0px;top:13px;font-size:11px;letter-spacing:-0.3px;color:#d2d2d2">00:00:07</div>
<div class="a" style="left:1036px;top:27px;width:1px;height:3px;background:#bdbdbd"></div>
<div class="a" style="left:1072px;top:23px;width:1px;height:7px;background:#bdbdbd"></div>
<div class="a" style="left:1108px;top:27px;width:1px;height:3px;background:#bdbdbd"></div>
<div class="a" style="left:1144.0px;top:14px;width:1px;height:16px;background:#dcdcdc"></div>
<div class="t" style="left:1147.0px;top:13px;font-size:11px;letter-spacing:-0.3px;color:#d2d2d2">00:00:08</div>
<div class="a" style="left:1179px;top:27px;width:1px;height:3px;background:#bdbdbd"></div>
<div class="a" style="left:1215px;top:23px;width:1px;height:7px;background:#bdbdbd"></div>
</div>
<div class="a" style="left:1358px;top:698px;width:2px;height:26px;background:#e6e6e6"></div>
<div class="a" style="left:1353px;top:694px;width:0;height:0;border-left:6px solid transparent;border-right:6px solid transparent;border-top:6px solid #e6e6e6"></div>
<div class="a" style="left:662px;top:731px;width:104px;height:20px;background:#1e1e1e;border:1px solid #2a2a2a;border-radius:3px"></div>
<div class="a" style="left:753px;top:732px;width:12px;height:18px;background:#4a4a4a;border-radius:0 2px 2px 0"></div>
<div class="a" style="left:755px;top:735px;width:0;height:0;border-left:4px solid transparent;border-right:4px solid transparent;border-bottom:4px solid #aaa"></div>
<div class="a" style="left:755px;top:743px;width:0;height:0;border-left:4px solid transparent;border-right:4px solid transparent;border-top:4px solid #aaa"></div>
<div class="t" style="left:670px;top:733px;font-family:'Liberation Mono',monospace;font-size:11.5px;letter-spacing:0">00:00:04:24</div>
<div class="t" style="left:773px;top:736px">/</div>
<div class="t" style="left:784px;top:736px;letter-spacing:-0.55px">00:00:08:19</div>
<div class="t r" style="left:1700px;top:736px;width:1203px;left:700px;letter-spacing:0.45px">--:--:--:-- &nbsp;/ &nbsp;--:--:--:--</div>
<svg class="ic" width="16" height="16" viewBox="0 0 16 16" style="left:1182px;top:732px"><path d="M3.5 3.7h2.2v8.6h-2.2z M12.3 3.7v8.6l-6.2-4.3z" fill="#dcdcdc" /></svg>
<svg class="ic" width="16" height="16" viewBox="0 0 16 16" style="left:1209px;top:732px"><path d="M8 3.8v8.4l-6-4.2z M14 3.8v8.4l-6-4.2z" fill="#dcdcdc" /></svg>
<svg class="ic" width="16" height="16" viewBox="0 0 16 16" style="left:1235.5px;top:732px"><path d="M5.2 3.6v8.8l6-4.4z" fill="#dcdcdc" /></svg>
<svg class="ic" width="16" height="16" viewBox="0 0 16 16" style="left:1262.5px;top:732px"><path d="M2 3.8v8.4l6-4.2z M8 3.8v8.4l6-4.2z" fill="#dcdcdc" /></svg>
<svg class="ic" width="16" height="16" viewBox="0 0 16 16" style="left:1290px;top:732px"><path d="M10.3 3.7h2.2v8.6h-2.2z M3.7 3.7v8.6l6.2-4.3z" fill="#dcdcdc" /></svg>
<svg class="ic" width="16" height="16" viewBox="0 0 16 16" style="left:1318px;top:732px"><path d="M4.6 5A4.9 4.9 0 1 1 5 12.6" fill="none" stroke="#dcdcdc" stroke-width="1.7" /><path d="M2 2l.6 5.4l5-1.6z" fill="#dcdcdc" /></svg>
<svg class="ic" width="16" height="16" viewBox="0 0 16 16" style="left:1354px;top:732px"><path d="M4 4h8v8h-8z" fill="#dcdcdc" /><path d="M2 4.2v-2.2h2.2M11.8 2h2.2v2.2M14 11.8v2.2h-2.2M4.2 14h-2.2v-2.2" fill="none" stroke="#dcdcdc" stroke-width="1" /></svg>
<svg class="ic" width="16" height="16" viewBox="0 0 16 16" style="left:1390px;top:732px"><rect x="3.4" y="1.5" width="1.2" height="13" fill="#dcdcdc"/><rect x="1.5" y="3.4" width="13" height="1.2" fill="#dcdcdc"/><rect x="6.1" y="1.5" width="1.2" height="13" fill="#dcdcdc"/><rect x="1.5" y="6.1" width="13" height="1.2" fill="#dcdcdc"/><rect x="8.8" y="1.5" width="1.2" height="13" fill="#dcdcdc"/><rect x="1.5" y="8.8" width="13" height="1.2" fill="#dcdcdc"/><rect x="11.5" y="1.5" width="1.2" height="13" fill="#dcdcdc"/><rect x="1.5" y="11.5" width="13" height="1.2" fill="#dcdcdc"/></svg>
<svg class="ic" width="16" height="16" viewBox="0 0 16 16" style="left:1428px;top:732px"><path d="M1.6 6.4h1.6l3-2.8v8.8l-3-2.8h-1.6z" fill="#dcdcdc" /><path d="M8.6 5.4a3.6 3.6 0 0 1 0 5.2" fill="none" stroke="#dcdcdc" stroke-width="1.1" /><path d="M10.5 3.7a6 6 0 0 1 0 8.6" fill="none" stroke="#dcdcdc" stroke-width="1.1" /><path d="M12.4 2.2a8.2 8.2 0 0 1 0 11.6" fill="none" stroke="#dcdcdc" stroke-width="1.1" /></svg>
<div class="a" style="left:1339px;top:738px;width:0;height:0;border-left:4px solid transparent;border-right:4px solid transparent;border-top:4px solid #8a8a8a"></div>
<div class="a" style="left:1375px;top:738px;width:0;height:0;border-left:4px solid transparent;border-right:4px solid transparent;border-top:4px solid #8a8a8a"></div>
<div class="a" style="left:1411px;top:738px;width:0;height:0;border-left:4px solid transparent;border-right:4px solid transparent;border-top:4px solid #8a8a8a"></div>
<div class="tabs" style="left:662px;top:759px;width:59px;height:22px"></div><div class="t c" style="left:662px;top:764px;width:59px">Source</div>
<div class="tabs sel" style="left:722px;top:757px;width:59px;height:26px"></div><div class="t c" style="left:722px;top:765px;width:59px">Project</div>
<div class="tabs sel" style="left:2px;top:757px;width:53px;height:26px"></div><div class="t c" style="left:2px;top:765px;width:53px">Filters</div>
<div class="tabs" style="left:57px;top:759px;width:59px;height:22px"></div><div class="t c" style="left:57px;top:764px;width:59px">Playlist</div>
<div class="tabs" style="left:118px;top:759px;width:45px;height:22px"></div><div class="t c" style="left:118px;top:764px;width:45px">Files</div>
<div class="tabs" style="left:164px;top:759px;width:76px;height:22px"></div><div class="t c" style="left:164px;top:764px;width:76px">Properties</div>
<div class="tabs" style="left:241px;top:759px;width:59px;height:22px"></div><div class="t c" style="left:241px;top:764px;width:59px">Recent</div>
<div class="tabs" style="left:301px;top:759px;width:64px;height:22px"></div><div class="t c" style="left:301px;top:764px;width:64px">Markers</div>
<div class="tabs" style="left:367px;top:759px;width:68px;height:22px"></div><div class="t c" style="left:367px;top:764px;width:68px">Subtitles</div>
<div class="tabs" style="left:437px;top:759px;width:52px;height:22px"></div><div class="t c" style="left:437px;top:764px;width:52px">Notes</div>
<div class="tabs" style="left:491px;top:759px;width:56px;height:22px"></div><div class="t c" style="left:491px;top:764px;width:56px">Export</div>
<div class="tabs" style="left:549px;top:759px;width:45px;height:22px"></div><div class="t c" style="left:549px;top:764px;width:45px">Jobs</div>
<div class="a" style="left:953px;top:787px;width:18px;height:1px;background:repeating-linear-gradient(90deg,#8a8a8a 0 1px,transparent 1px 2px)"></div>
<!-- TIMELINE DOCK -->
<div class="t" style="left:4px;top:793px">Timeline</div>
<svg class="ic" width="10" height="10" viewBox="0 0 10 10" style="left:1036px;top:793px"><rect x=".5" y=".5" width="9" height="9" rx="1.5" fill="none" stroke="#555" stroke-width="1"/><path d="M3 4h4v3.5h-4z M4 3h4v3.5" fill="none" stroke="#555" stroke-width="1"/></svg><svg class="ic" width="10" height="10" viewBox="0 0 10 10" style="left:1056px;top:793px"><rect x=".5" y=".5" width="9" height="9" rx="1.5" fill="none" stroke="#555" stroke-width="1"/><path d="M2 2l6 6M8 2l-6 6" fill="none" stroke="#666" stroke-width="1"/></svg>
<div class="hl" style="left:0;top:808px;width:1071px;box-shadow:none;background:#777"></div>
<div class="a" style="left:0;top:832px;width:1071px;height:1px;background:#282828"></div>
<div class="a" style="left:391px;top:810px;width:22px;height:22px;background:#2b6b86;border:1px solid #3a85a3;border-radius:3px"></div>
<svg class="ic" width="18" height="18" viewBox="0 0 16 16" style="left:393px;top:811px"><path d="M2.5 14v-6.5a5.5 5.5 0 0 1 11 0v6.5h-3.6v-6.5a1.9 1.9 0 0 0 -3.8 0v6.5z" fill="#f0f0f0"/><rect x="3.5" y="11" width="1.6" height="2" fill="#2e6f8a"/><rect x="10.9" y="11" width="1.6" height="2" fill="#2e6f8a"/></svg>
<svg class="ic" width="16" height="16" viewBox="0 0 16 16" style="left:5px;top:812px"><path d="M3.5 3.2h8.6v1.7h-8.6z M3.5 7h8.6v1.7h-8.6z M3.5 10.8h8.6v1.7h-8.6z" fill="#dcdcdc" /></svg>
<svg class="ic" width="16" height="16" viewBox="0 0 16 16" style="left:42px;top:812px"><path d="M2 4.2c3 .2 6 2 9.5 5.6" fill="none" stroke="#dcdcdc" stroke-width="1.3" /><path d="M3.5 9.8c3-.4 6-2.6 8-7" fill="none" stroke="#dcdcdc" stroke-width="1.3" /><circle cx="12.2" cy="11.6" r="1.7" fill="none" stroke="#dcdcdc" stroke-width="1.2"/><circle cx="12.6" cy="6.6" r="1.5" fill="none" stroke="#dcdcdc" stroke-width="1.2"/></svg>
<svg class="ic" width="16" height="16" viewBox="0 0 16 16" style="left:69px;top:812px"><path d="M6.2 1.7h5l2.8 2.8v7.3h-3.4v-5.4l-3.3-3.3h-1.1z" fill="#dcdcdc" /><path d="M10.9 1.9v2.9h2.9" fill="none" stroke="#323232" stroke-width=".9"/><path d="M1.7 4h5.6l2.8 2.8v7.1h-8.4z" fill="#dcdcdc" /><path d="M7 4.2v2.9h2.9" fill="none" stroke="#323232" stroke-width=".9"/></svg>
<svg class="ic" width="16" height="16" viewBox="0 0 16 16" style="left:96px;top:812px"><path d="M3.3 3.3h9.4v10.4h-9.4z" fill="none" stroke="#dcdcdc" stroke-width="1.3" stroke-linejoin="round"/><path d="M4.8 4.8h6.4v7.4h-6.4z" fill="#dcdcdc" /><path d="M6 2.2h1.2l.8-1l.8 1h1.2v1.6h-4z" fill="#dcdcdc" /></svg>
<svg class="ic" width="16" height="16" viewBox="0 0 16 16" style="left:132px;top:812px"><path d="M6.5 1h4l3 3v9h-7v-4h2v-2.4h-2z" fill="#dcdcdc" /><path d="M10.3 1.4v2.9h2.9" fill="none" stroke="#323232" stroke-width=".9"/><path d="M3.4 7.2h1.8v2.1h2.1v1.8h-2.1v2.1h-1.8v-2.1h-2.1v-1.8h2.1z" fill="#dcdcdc" /></svg>
<svg class="ic" width="14" height="14" viewBox="0 0 16 16" style="left:160px;top:813px"><path d="M5.9 1.8h4.2v4.1h4.1v4.2h-4.1v4.1h-4.2v-4.1h-4.1v-4.2h4.1z" fill="#dcdcdc" /></svg>
<svg class="ic" width="14" height="14" viewBox="0 0 16 16" style="left:187px;top:813px"><path d="M1.9 5.9h12.2v4.2h-12.2z" fill="#dcdcdc" /></svg>
<svg class="ic" width="16" height="16" viewBox="0 0 16 16" style="left:213px;top:812px"><path d="M4 10l4-4l4 4" fill="none" stroke="#dcdcdc" stroke-width="1.6" /></svg>
<svg class="ic" width="16" height="16" viewBox="0 0 16 16" style="left:240px;top:812px"><path d="M4 6.5l4 4l4-4" fill="none" stroke="#dcdcdc" stroke-width="1.6" /></svg>
<svg class="ic" width="16" height="16" viewBox="0 0 16 16" style="left:267px;top:812px"><path d="M1 2.4h6.7v11.2h-6.7v-1.9h4.5v-7.4h-4.5z M15 2.4h-6.7v11.2h6.7v-1.9h-4.5v-7.4h4.5z" fill="#dcdcdc" /></svg>
<svg class="ic" width="16" height="16" viewBox="0 0 16 16" style="left:303px;top:812px"><path d="M4 3.5h8v5.2l-4 3.8l-4-3.8z" fill="#dcdcdc" /></svg>
<svg class="ic" width="16" height="16" viewBox="0 0 16 16" style="left:331px;top:812px"><path d="M10 3.5l-4.5 4.5l4.5 4.5" fill="none" stroke="#dcdcdc" stroke-width="1.6" /></svg>
<svg class="ic" width="16" height="16" viewBox="0 0 16 16" style="left:358px;top:812px"><path d="M6 3.5l4.5 4.5l-4.5 4.5" fill="none" stroke="#dcdcdc" stroke-width="1.6" /></svg>
<svg class="ic" width="16" height="16" viewBox="0 0 16 16" style="left:421px;top:812px"><path d="M.8 8l3.4-3.1q3.8-1.9 7.6 0l3.4 3.1l-3.4 3.1q-3.8 1.9-7.6 0z" fill="none" stroke="#dcdcdc" stroke-width="1.1" /><path d="M3.6 8l2-1.9q2.4-1.1 4.8 0l2 1.9l-2 1.9q-2.4 1.1-4.8 0z" fill="none" stroke="#dcdcdc" stroke-width="1.1" /><path d="M8 6.3a1.7 1.7 0 1 0 .01 0z" fill="#dcdcdc" /></svg>
<svg class="ic" width="16" height="16" viewBox="0 0 16 16" style="left:448px;top:812px"><path d="M8 1.2a6.8 6.8 0 1 0 .01 0z" fill="none" stroke="#dcdcdc" stroke-width="1.7" /><path d="M8 4.6a3.4 3.4 0 1 0 .01 0z" fill="none" stroke="#dcdcdc" stroke-width="1.6" /><path d="M8 6.9a1.1 1.1 0 1 0 .01 0z" fill="#dcdcdc" /></svg>
<svg class="ic" width="16" height="16" viewBox="0 0 16 16" style="left:475px;top:812px"><path d="M8 1.2a6.8 6.8 0 1 0 .01 0z" fill="none" stroke="#dcdcdc" stroke-width="1.7" /><path d="M8 3.9v8.2M4.45 5.95l7.1 4.1M11.55 5.95l-7.1 4.1" fill="none" stroke="#dcdcdc" stroke-width="1.7" /></svg>
<svg class="ic" width="16" height="16" viewBox="0 0 16 16" style="left:502px;top:812px"><path d="M8 1.2a6.8 6.8 0 1 0 .01 0z" fill="none" stroke="#dcdcdc" stroke-width="1.7" /><path d="M4.6 4.4h6.8v4l-3.4 3.4l-3.4-3.4z" fill="#dcdcdc" /></svg>
<svg class="ic" width="16" height="16" viewBox="0 0 16 16" style="left:539px;top:812px"><path d="M6.2 2a4.2 4.2 0 1 0 .01 0z" fill="none" stroke="#dcdcdc" stroke-width="1.2" /><path d="M4.2 6.2h4" fill="none" stroke="#dcdcdc" stroke-width="1.2" /><path d="M9.4 9.4l4.6 4.6" fill="none" stroke="#dcdcdc" stroke-width="2.4" stroke-linecap="round"/></svg>
<svg class="ic" width="16" height="16" viewBox="0 0 16 16" style="left:769px;top:812px"><path d="M6.2 2a4.2 4.2 0 1 0 .01 0z" fill="none" stroke="#dcdcdc" stroke-width="1.2" /><path d="M4.2 6.2h4M6.2 4.2v4" fill="none" stroke="#dcdcdc" stroke-width="1.2" /><path d="M9.4 9.4l4.6 4.6" fill="none" stroke="#dcdcdc" stroke-width="2.4" stroke-linecap="round"/></svg>
<svg class="ic" width="16" height="16" viewBox="0 0 16 16" style="left:796px;top:812px"><path d="M4 4h8v8h-8z" fill="#dcdcdc" /><path d="M2 4.2v-2.2h2.2M11.8 2h2.2v2.2M14 11.8v2.2h-2.2M4.2 14h-2.2v-2.2" fill="none" stroke="#dcdcdc" stroke-width="1" /></svg>
<svg class="ic" width="16" height="16" viewBox="0 0 16 16" style="left:832px;top:812px"><path d="M6.2 3.3a1.8 1.8 0 0 1 3.6 0v4.2a1.8 1.8 0 0 1 -3.6 0z" fill="#dcdcdc" /><path d="M4.2 7v.6a3.8 3.8 0 0 0 7.6 0v-.6" fill="none" stroke="#dcdcdc" stroke-width="1.1" /><path d="M7.4 11.4h1.2v2h-1.2z M5.2 13.3h5.6v1.2h-5.6z" fill="#dcdcdc" /></svg>
<div class="a" style="left:32px;top:812px;width:1px;height:17px;background:#2a2a2a"></div>
<div class="a" style="left:123px;top:812px;width:1px;height:17px;background:#2a2a2a"></div>
<div class="a" style="left:293px;top:812px;width:1px;height:17px;background:#2a2a2a"></div>
<div class="a" style="left:384px;top:812px;width:1px;height:17px;background:#2a2a2a"></div>
<div class="a" style="left:526px;top:812px;width:1px;height:17px;background:#2a2a2a"></div>
<div class="a" style="left:823px;top:812px;width:1px;height:17px;background:#2a2a2a"></div>
<div class="a" style="left:19px;top:826px;width:0;height:0;border-left:3px solid transparent;border-right:3px solid transparent;border-top:3px solid #9a9a9a"></div>
<div class="a" style="left:146px;top:826px;width:0;height:0;border-left:3px solid transparent;border-right:3px solid transparent;border-top:3px solid #9a9a9a"></div>
<div class="a" style="left:564px;top:819px;width:197px;height:3px;background:#262626;border-radius:2px;box-shadow:0 1px 0 #3c3c3c"></div>
<div class="a" style="left:564px;top:819px;width:64px;height:3px;background:#2a7ea3;border-radius:2px"></div>
<div class="a" style="left:626px;top:814px;width:11px;height:13px;background:#4b4b4b;border:1px solid #222;border-radius:2px"></div>
<div class="a" style="left:151px;top:833px;width:261px;height:28px;background:#1e1e1e"></div>
<div class="t" style="left:8px;top:841px">Output</div>
<div class="t" style="left:153px;top:845px;letter-spacing:-0.6px">00:00:00</div>
<div class="a" style="left:301px;top:843px;width:1px;height:18px;background:#dcdcdc"></div>
<div class="t" style="left:304px;top:845px;letter-spacing:-0.6px">00:00:05</div>
<div class="a" style="left:0;top:861px;width:412px;height:20px;background:#5e5d24"></div>
<div class="t" style="left:12px;top:866px;letter-spacing:-1px">V5</div>
<svg class="ic" width="16" height="16" viewBox="0 0 16 16" style="left:40px;top:863px"><path d="M1 7.2h9.9v7.8h-9.9z" fill="#dcdcdc" /><path d="M7.9 7.4v-2.5a3.3 3.3 0 0 1 6.6 0v.9" fill="none" stroke="#dcdcdc" stroke-width="1.7" /></svg><svg class="ic" width="16" height="16" viewBox="0 0 16 16" style="left:68px;top:863px"><path d="M1.6 6.4h1.6l3-2.8v8.8l-3-2.8h-1.6z" fill="#dcdcdc" /><path d="M8.6 5.4a3.6 3.6 0 0 1 0 5.2" fill="none" stroke="#dcdcdc" stroke-width="1.1" /><path d="M10.5 3.7a6 6 0 0 1 0 8.6" fill="none" stroke="#dcdcdc" stroke-width="1.1" /><path d="M12.4 2.2a8.2 8.2 0 0 1 0 11.6" fill="none" stroke="#dcdcdc" stroke-width="1.1" /></svg><svg class="ic" width="16" height="16" viewBox="0 0 16 16" style="left:96px;top:863px"><path d="M8 3.4c3.4 0 6 2.4 7.4 4.6c-1.4 2.2-4 4.6-7.4 4.6s-6-2.4-7.4-4.6c1.4-2.2 4-4.6 7.4-4.6z M8 5a3 3 0 1 0 .01 0z" fill="#dcdcdc" fill-rule="evenodd"/><path d="M8 6.5a1.5 1.5 0 1 0 .01 0z" fill="#dcdcdc" /></svg>
<div class="a" style="left:0;top:881px;width:412px;height:20px;background:#2a2a2a"></div>
<div class="t" style="left:12px;top:886px;letter-spacing:-1px">V4</div>
<svg class="ic" width="16" height="16" viewBox="0 0 16 16" style="left:40px;top:883px"><path d="M1 7.2h9.9v7.8h-9.9z" fill="#dcdcdc" /><path d="M7.9 7.4v-2.5a3.3 3.3 0 0 1 6.6 0v.9" fill="none" stroke="#dcdcdc" stroke-width="1.7" /></svg><svg class="ic" width="16" height="16" viewBox="0 0 16 16" style="left:68px;top:883px"><path d="M1.6 6.4h1.6l3-2.8v8.8l-3-2.8h-1.6z" fill="#dcdcdc" /><path d="M8.6 5.4a3.6 3.6 0 0 1 0 5.2" fill="none" stroke="#dcdcdc" stroke-width="1.1" /><path d="M10.5 3.7a6 6 0 0 1 0 8.6" fill="none" stroke="#dcdcdc" stroke-width="1.1" /><path d="M12.4 2.2a8.2 8.2 0 0 1 0 11.6" fill="none" stroke="#dcdcdc" stroke-width="1.1" /></svg><svg class="ic" width="16" height="16" viewBox="0 0 16 16" style="left:96px;top:883px"><path d="M8 3.4c3.4 0 6 2.4 7.4 4.6c-1.4 2.2-4 4.6-7.4 4.6s-6-2.4-7.4-4.6c1.4-2.2 4-4.6 7.4-4.6z M8 5a3 3 0 1 0 .01 0z" fill="#dcdcdc" fill-rule="evenodd"/><path d="M8 6.5a1.5 1.5 0 1 0 .01 0z" fill="#dcdcdc" /></svg>
<div class="a" style="left:0;top:901px;width:412px;height:20px;background:#1f1f1f"></div>
<div class="t" style="left:12px;top:906px;letter-spacing:-1px">V3</div>
<svg class="ic" width="16" height="16" viewBox="0 0 16 16" style="left:40px;top:903px"><path d="M1 7.2h9.9v7.8h-9.9z" fill="#dcdcdc" /><path d="M7.9 7.4v-2.5a3.3 3.3 0 0 1 6.6 0v.9" fill="none" stroke="#dcdcdc" stroke-width="1.7" /></svg><svg class="ic" width="16" height="16" viewBox="0 0 16 16" style="left:68px;top:903px"><path d="M1.6 6.4h1.6l3-2.8v8.8l-3-2.8h-1.6z" fill="#dcdcdc" /><path d="M8.6 5.4a3.6 3.6 0 0 1 0 5.2" fill="none" stroke="#dcdcdc" stroke-width="1.1" /><path d="M10.5 3.7a6 6 0 0 1 0 8.6" fill="none" stroke="#dcdcdc" stroke-width="1.1" /><path d="M12.4 2.2a8.2 8.2 0 0 1 0 11.6" fill="none" stroke="#dcdcdc" stroke-width="1.1" /></svg><svg class="ic" width="16" height="16" viewBox="0 0 16 16" style="left:96px;top:903px"><path d="M8 3.4c3.4 0 6 2.4 7.4 4.6c-1.4 2.2-4 4.6-7.4 4.6s-6-2.4-7.4-4.6c1.4-2.2 4-4.6 7.4-4.6z M8 5a3 3 0 1 0 .01 0z" fill="#dcdcdc" fill-rule="evenodd"/><path d="M8 6.5a1.5 1.5 0 1 0 .01 0z" fill="#dcdcdc" /></svg>
<div class="a" style="left:0;top:921px;width:412px;height:20px;background:#2a2a2a"></div>
<div class="t" style="left:12px;top:926px;letter-spacing:-1px">V2</div>
<svg class="ic" width="16" height="16" viewBox="0 0 16 16" style="left:40px;top:923px"><path d="M1 7.2h9.9v7.8h-9.9z" fill="#dcdcdc" /><path d="M7.9 7.4v-2.5a3.3 3.3 0 0 1 6.6 0v.9" fill="none" stroke="#dcdcdc" stroke-width="1.7" /></svg><svg class="ic" width="16" height="16" viewBox="0 0 16 16" style="left:68px;top:923px"><path d="M1.6 6.4h1.6l3-2.8v8.8l-3-2.8h-1.6z" fill="#dcdcdc" /><path d="M8.6 5.4a3.6 3.6 0 0 1 0 5.2" fill="none" stroke="#dcdcdc" stroke-width="1.1" /><path d="M10.5 3.7a6 6 0 0 1 0 8.6" fill="none" stroke="#dcdcdc" stroke-width="1.1" /><path d="M12.4 2.2a8.2 8.2 0 0 1 0 11.6" fill="none" stroke="#dcdcdc" stroke-width="1.1" /></svg><svg class="ic" width="16" height="16" viewBox="0 0 16 16" style="left:96px;top:923px"><path d="M8 3.4c3.4 0 6 2.4 7.4 4.6c-1.4 2.2-4 4.6-7.4 4.6s-6-2.4-7.4-4.6c1.4-2.2 4-4.6 7.4-4.6z M8 5a3 3 0 1 0 .01 0z" fill="#dcdcdc" fill-rule="evenodd"/><path d="M8 6.5a1.5 1.5 0 1 0 .01 0z" fill="#dcdcdc" /></svg>
<div class="a" style="left:0;top:941px;width:412px;height:20px;background:#1f1f1f"></div>
<div class="t" style="left:12px;top:946px;letter-spacing:-1px">V1</div>
<svg class="ic" width="16" height="16" viewBox="0 0 16 16" style="left:40px;top:943px"><path d="M1 7.2h9.9v7.8h-9.9z" fill="#dcdcdc" /><path d="M7.9 7.4v-2.5a3.3 3.3 0 0 1 6.6 0v.9" fill="none" stroke="#dcdcdc" stroke-width="1.7" /></svg><svg class="ic" width="16" height="16" viewBox="0 0 16 16" style="left:68px;top:943px"><path d="M1.6 6.4h1.6l3-2.8v8.8l-3-2.8h-1.6z" fill="#dcdcdc" /><path d="M8.6 5.4a3.6 3.6 0 0 1 0 5.2" fill="none" stroke="#dcdcdc" stroke-width="1.1" /><path d="M10.5 3.7a6 6 0 0 1 0 8.6" fill="none" stroke="#dcdcdc" stroke-width="1.1" /><path d="M12.4 2.2a8.2 8.2 0 0 1 0 11.6" fill="none" stroke="#dcdcdc" stroke-width="1.1" /></svg><svg class="ic" width="16" height="16" viewBox="0 0 16 16" style="left:96px;top:943px"><path d="M8 3.4c3.4 0 6 2.4 7.4 4.6c-1.4 2.2-4 4.6-7.4 4.6s-6-2.4-7.4-4.6c1.4-2.2 4-4.6 7.4-4.6z M8 5a3 3 0 1 0 .01 0z" fill="#dcdcdc" fill-rule="evenodd"/><path d="M8 6.5a1.5 1.5 0 1 0 .01 0z" fill="#dcdcdc" /></svg>
<div class="a" style="left:150px;top:833px;width:1px;height:128px;background:#dcdcdc"></div>
<div class="a" style="left:226px;top:861px;width:121px;height:20px;background:linear-gradient(#0e3448,#1a5a76);border:1px solid #e81010"></div>
<div class="a" style="left:243px;top:862px;width:75px;height:15px;background:#9ba9af"></div>
<svg class="ic" width="12" height="12" viewBox="0 0 12 12" style="left:245px;top:863px"><path d="M.5 1h11l-4.2 4.6v4.4l-2.6 1.5v-5.9z" fill="#2e3438"/></svg>
<div class="t" style="left:259px;top:863px;color:#1a1a1a;letter-spacing:-0.4px">transparent</div>
<div class="a" style="left:226px;top:881px;width:121px;height:20px;background:linear-gradient(#2a8fbd,#186381);border:1px solid #000"></div>
<div class="a" style="left:243px;top:882px;width:75px;height:15px;background:#a4c1ce"></div>
<svg class="ic" width="12" height="12" viewBox="0 0 12 12" style="left:245px;top:883px"><path d="M.5 1h11l-4.2 4.6v4.4l-2.6 1.5v-5.9z" fill="#2e3438"/></svg>
<div class="t" style="left:259px;top:883px;color:#1a1a1a;letter-spacing:-0.4px">transparent</div>
<div class="a" style="left:226px;top:901px;width:121px;height:20px;background:linear-gradient(#2a8fbd,#186381);border:1px solid #000"></div>
<div class="a" style="left:243px;top:902px;width:75px;height:15px;background:#a4c1ce"></div>
<svg class="ic" width="12" height="12" viewBox="0 0 12 12" style="left:245px;top:903px"><path d="M.5 1h11l-4.2 4.6v4.4l-2.6 1.5v-5.9z" fill="#2e3438"/></svg>
<div class="t" style="left:259px;top:903px;color:#1a1a1a;letter-spacing:-0.4px">transparent</div>
<div class="a" style="left:226px;top:921px;width:121px;height:20px;background:linear-gradient(#2a8fbd,#186381);border:1px solid #000"></div>
<div class="a" style="left:243px;top:922px;width:75px;height:15px;background:#a4c1ce"></div>
<svg class="ic" width="12" height="12" viewBox="0 0 12 12" style="left:245px;top:923px"><path d="M.5 1h11l-4.2 4.6v4.4l-2.6 1.5v-5.9z" fill="#2e3438"/></svg>
<div class="t" style="left:259px;top:923px;color:#1a1a1a;letter-spacing:-0.4px">transparent</div>
<div class="a" style="left:150px;top:941px;width:262px;height:20px;background:linear-gradient(#2a8fbd,#186381);border:1px solid #000"></div>
<div class="a" style="left:167px;top:942px;width:70px;height:15px;background:#a4c1ce"></div>
<svg class="ic" width="12" height="12" viewBox="0 0 12 12" style="left:169px;top:943px"><path d="M.5 1h11l-4.2 4.6v4.4l-2.6 1.5v-5.9z" fill="#2e3438"/></svg>
<div class="t" style="left:183px;top:943px;color:#1a1a1a;transform:scaleX(.82);transform-origin:0 0">#FFE8E8E8</div>
<div class="a" style="left:339px;top:942px;width:54px;height:15px;background:#a4c1ce"></div>
<div class="t" style="left:341px;top:943px;color:#1a1a1a;transform:scaleX(.82);transform-origin:0 0">#FFE8E8E8</div>
<div class="a" style="left:295px;top:833px;width:1px;height:168px;background:#e6e6e6;box-shadow:1px 0 0 rgba(230,230,230,.55)"></div>
<div class="a" style="left:288px;top:833px;width:0;height:0;border-left:8px solid transparent;border-right:8px solid transparent;border-top:8px solid #e6e6e6"></div>
<div class="a" style="left:1074px;top:897px;width:1px;height:18px;background:repeating-linear-gradient(#8a8a8a 0 1px,transparent 1px 2px)"></div>
<!-- KEYFRAMES DOCK -->
<div class="t" style="left:1080px;top:793px">Keyframes</div>
<svg class="ic" width="10" height="10" viewBox="0 0 10 10" style="left:1885px;top:793px"><rect x=".5" y=".5" width="9" height="9" rx="1.5" fill="none" stroke="#555" stroke-width="1"/><path d="M3 4h4v3.5h-4z M4 3h4v3.5" fill="none" stroke="#555" stroke-width="1"/></svg><svg class="ic" width="10" height="10" viewBox="0 0 10 10" style="left:1904px;top:793px"><rect x=".5" y=".5" width="9" height="9" rx="1.5" fill="none" stroke="#555" stroke-width="1"/><path d="M2 2l6 6M8 2l-6 6" fill="none" stroke="#666" stroke-width="1"/></svg>
<div class="hl" style="left:1077px;top:808px;width:843px;box-shadow:none;background:#777"></div>
<div class="a" style="left:1077px;top:832px;width:843px;height:1px;background:#282828"></div>
<div class="a" style="left:1233px;top:810px;width:22px;height:22px;background:#2b6b86;border:1px solid #3a85a3;border-radius:3px"></div>
<svg class="ic" width="18" height="18" viewBox="0 0 16 16" style="left:1235px;top:811px"><path d="M2.5 14v-6.5a5.5 5.5 0 0 1 11 0v6.5h-3.6v-6.5a1.9 1.9 0 0 0 -3.8 0v6.5z" fill="#f0f0f0"/><rect x="3.5" y="11" width="1.6" height="2" fill="#2e6f8a"/><rect x="10.9" y="11" width="1.6" height="2" fill="#2e6f8a"/></svg>
<svg class="ic" width="16" height="16" viewBox="0 0 16 16" style="left:1081px;top:812px"><path d="M3.5 3.2h8.6v1.7h-8.6z M3.5 7h8.6v1.7h-8.6z M3.5 10.8h8.6v1.7h-8.6z" fill="#dcdcdc" /></svg>
<svg class="ic" width="16" height="16" viewBox="0 0 16 16" style="left:1263px;top:812px"><path d="M.8 8l3.4-3.1q3.8-1.9 7.6 0l3.4 3.1l-3.4 3.1q-3.8 1.9-7.6 0z" fill="none" stroke="#dcdcdc" stroke-width="1.1" /><path d="M3.6 8l2-1.9q2.4-1.1 4.8 0l2 1.9l-2 1.9q-2.4 1.1-4.8 0z" fill="none" stroke="#dcdcdc" stroke-width="1.1" /><path d="M8 6.3a1.7 1.7 0 1 0 .01 0z" fill="#dcdcdc" /></svg>
<svg class="ic" width="16" height="16" viewBox="0 0 16 16" style="left:1300px;top:812px"><path d="M6.2 2a4.2 4.2 0 1 0 .01 0z" fill="none" stroke="#dcdcdc" stroke-width="1.2" /><path d="M4.2 6.2h4" fill="none" stroke="#dcdcdc" stroke-width="1.2" /><path d="M9.4 9.4l4.6 4.6" fill="none" stroke="#dcdcdc" stroke-width="2.4" stroke-linecap="round"/></svg>
<svg class="ic" width="16" height="16" viewBox="0 0 16 16" style="left:1530px;top:812px"><path d="M6.2 2a4.2 4.2 0 1 0 .01 0z" fill="none" stroke="#dcdcdc" stroke-width="1.2" /><path d="M4.2 6.2h4M6.2 4.2v4" fill="none" stroke="#dcdcdc" stroke-width="1.2" /><path d="M9.4 9.4l4.6 4.6" fill="none" stroke="#dcdcdc" stroke-width="2.4" stroke-linecap="round"/></svg>
<svg class="ic" width="16" height="16" viewBox="0 0 16 16" style="left:1557px;top:812px"><path d="M4 4h8v8h-8z" fill="#dcdcdc" /><path d="M2 4.2v-2.2h2.2M11.8 2h2.2v2.2M14 11.8v2.2h-2.2M4.2 14h-2.2v-2.2" fill="none" stroke="#dcdcdc" stroke-width="1" /></svg>
<div class="a" style="left:1095px;top:826px;width:0;height:0;border-left:3px solid transparent;border-right:3px solid transparent;border-top:3px solid #9a9a9a"></div>
<div class="t c" style="left:1116px;top:811px;width:20px;height:18px;font:bold 16px/18px 'Liberation Sans',sans-serif;letter-spacing:0;-webkit-text-stroke:.5px #dcdcdc">[</div>
<div class="t c" style="left:1142.5px;top:811px;width:20px;height:18px;font:bold 16px/18px 'Liberation Sans',sans-serif;letter-spacing:0;-webkit-text-stroke:.5px #dcdcdc">]</div>
<div class="t c" style="left:1170px;top:811px;width:20px;height:18px;font:bold 16px/18px 'Liberation Sans',sans-serif;letter-spacing:0;-webkit-text-stroke:.5px #dcdcdc">{</div>
<div class="t c" style="left:1196.5px;top:811px;width:20px;height:18px;font:bold 16px/18px 'Liberation Sans',sans-serif;letter-spacing:0;-webkit-text-stroke:.5px #dcdcdc">}</div>
<div class="a" style="left:1108px;top:812px;width:1px;height:17px;background:#2a2a2a"></div>
<div class="a" style="left:1226px;top:812px;width:1px;height:17px;background:#2a2a2a"></div>
<div class="a" style="left:1290px;top:812px;width:1px;height:17px;background:#2a2a2a"></div>
<div class="a" style="left:1325px;top:819px;width:196px;height:3px;background:#262626;border-radius:2px;box-shadow:0 1px 0 #3c3c3c"></div>
<div class="a" style="left:1325px;top:819px;width:64px;height:3px;background:#2a7ea3;border-radius:2px"></div>
<div class="a" style="left:1387px;top:814px;width:11px;height:13px;background:#4b4b4b;border:1px solid #222;border-radius:2px"></div>
<div class="a" style="left:1217px;top:833px;width:119px;height:28px;background:#1e1e1e"></div>
<div class="t" style="left:1219px;top:845px;letter-spacing:-0.6px">00:00:00</div>
<div class="a" style="left:1077px;top:861px;width:140px;height:20px;background:#2a2a2a"></div>
<div class="t" style="left:1080px;top:866px;letter-spacing:-0.4px">360: Equirecta...</div>
<svg class="ic" width="14" height="14" viewBox="0 0 16 16" style="left:1171px;top:864px"><path d="M3.5 3.7h2.2v8.6h-2.2z M12.3 3.7v8.6l-6.2-4.3z" fill="#dcdcdc" /></svg><svg class="ic" width="14" height="14" viewBox="0 0 16 16" style="left:1191px;top:864px"><path d="M10.3 3.7h2.2v8.6h-2.2z M3.7 3.7v8.6l6.2-4.3z" fill="#dcdcdc" /></svg>
<div class="a" style="left:1216px;top:861px;width:120px;height:20px;background:linear-gradient(#2a8fbd,#186381);border-bottom:1px solid #000"></div>
<div class="a" style="left:1216px;top:866px;width:5px;height:15px;background:#3cb43c"></div>
<div class="a" style="left:1331px;top:866px;width:5px;height:15px;background:#b4202a"></div>
<div class="a" style="left:1233px;top:862px;width:59px;height:15px;background:#a4c1ce"></div>
<div class="t" style="left:1234px;top:864px;color:#1a1a1a;letter-spacing:-0.4px">transparent</div>
<div class="a" style="left:1216px;top:861px;width:120px;height:20px;overflow:hidden">
<div class="a" style="left:2px;top:-2px;width:13px;height:13px;border-radius:50%;background:#0f2b3a;border:2px solid #e8e8e8"></div>
<div class="a" style="left:106px;top:-2px;width:13px;height:13px;border-radius:50%;background:#0f2b3a;border:2px solid #e8e8e8"></div>
</div>
<div class="a" style="left:1216px;top:833px;width:1px;height:48px;background:#dcdcdc"></div>
<div class="a" style="left:1285px;top:833px;width:1px;height:168px;background:#e6e6e6;box-shadow:1px 0 0 rgba(230,230,230,.4)"></div>
<div class="a" style="left:1278px;top:833px;width:0;height:0;border-left:8px solid transparent;border-right:8px solid transparent;border-top:8px solid #e6e6e6"></div>
<svg class="a" style="left:887px;top:568px" width="16" height="22" viewBox="0 0 16 22"><path d="M1.5 1.5v16l3.8-3.6l2.6 6l2.4-1l-2.6-5.8h5z" fill="#fff" stroke="#15151c" stroke-width="1.2" stroke-linejoin="round"/></svg>
</body>
</html>
